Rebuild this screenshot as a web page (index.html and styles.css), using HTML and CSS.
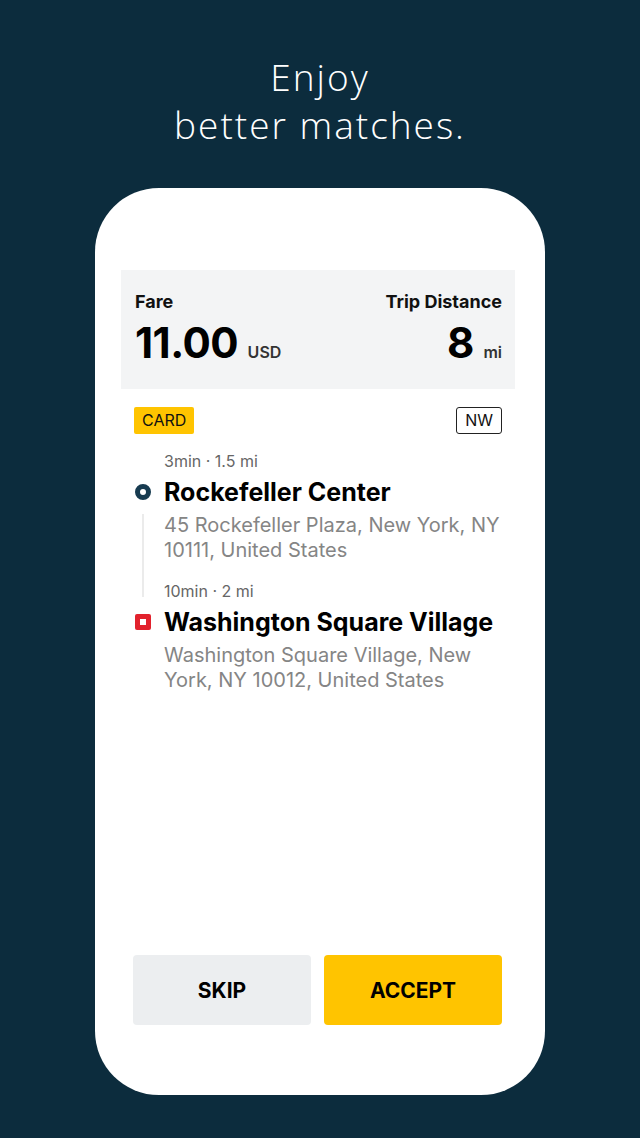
FILE: index.html
```html
<!DOCTYPE html>
<html lang="en">
<head>
    <meta charset="UTF-8">
    <meta name="viewport" content="width=device-width, initial-scale=1.0">
    <title>Enjoy better matches</title>
    <link rel="stylesheet" href="styles.css">
</head>
<body>

    <h1 class="headline">Enjoy<br>better matches.</h1>

    <div class="phone">
        <div class="summary">
            <div class="summary-col">
                <div class="summary-label">Fare</div>
                <div class="summary-value">11.00 <span class="unit">USD</span></div>
            </div>
            <div class="summary-col right">
                <div class="summary-label">Trip Distance</div>
                <div class="summary-value">8 <span class="unit">mi</span></div>
            </div>
        </div>

        <div class="trip">
            <div class="tags">
                <span class="tag tag-pay">CARD</span>
                <span class="tag tag-dir">NW</span>
            </div>

            <div class="route">
                <div class="meta m1">3min · 1.5 mi</div>
                <span class="pin pin-start i1"></span>
                <div class="place n1">Rockefeller Center</div>
                <div class="rail"></div>
                <div class="address a1">45 Rockefeller Plaza, New York, NY 10111, United States</div>
                <div class="meta m2">10min · 2 mi</div>
                <span class="pin pin-end i2"></span>
                <div class="place n2">Washington Square Village</div>
                <div class="address a2">Washington Square Village, New York, NY 10012, United States</div>
            </div>
        </div>

        <div class="actions">
            <button class="btn skip-btn">SKIP</button>
            <button class="btn accept-btn">ACCEPT</button>
        </div>
    </div>

</body>
</html>
```

FILE: styles.css
```css
body {
    margin: 0;
    background: #0c2c3d;
    font-family: Inter, "Liberation Sans", sans-serif;
    height: 1138px;
    overflow: hidden;
}
.headline {
    margin: 0;
    padding-top: 53px;
    text-align: center;
    color: #ffffff;
    font-family: "Open Sans", Lato, sans-serif;
    font-weight: 300;
    font-size: 37px;
    line-height: 48px;
    letter-spacing: 2px;
}
.phone {
    width: 450px;
    height: 907px;
    margin: 39px 0 0 95px;
    background: #ffffff;
    border-radius: 64px;
    box-sizing: border-box;
    padding: 82px 30px 0 26px;
    display: flex;
    flex-direction: column;
}
.summary {
    height: 119px;
    background: #f3f4f5;
    box-sizing: border-box;
    padding: 21px 13px 0 14px;
    display: flex;
    justify-content: space-between;
}
.summary-col.right {
    text-align: right;
}
.summary-label {
    font-size: 18px;
    font-weight: 700;
    line-height: 22px;
    color: #111111;
}
.summary-value {
    margin-top: 6px;
    font-size: 42px;
    font-weight: 700;
    line-height: 48px;
    color: #000000;
    letter-spacing: -0.5px;
}
.unit {
    font-size: 16px;
    font-weight: 600;
    color: #333333;
    letter-spacing: 0;
}
.trip {
    padding: 18px 13px 0 13px;
    flex: 1;
}
.tags {
    display: flex;
    justify-content: space-between;
}
.tag {
    height: 27px;
    box-sizing: border-box;
    padding: 0 8px;
    font-size: 16px;
    line-height: 27px;
    color: #111111;
}
.tag-pay {
    background: #ffc400;
    border-radius: 2px;
}
.tag-dir {
    border: 1px solid #222222;
    border-radius: 3px;
    line-height: 25px;
}
.route {
    display: grid;
    grid-template-columns: 30px 1fr;
    margin-top: 17px;
}
.meta {
    grid-column: 2;
    font-size: 16px;
    line-height: 20px;
    color: #666666;
}
.m1 { grid-row: 1; }
.m2 { grid-row: 4; margin-top: 18px; }
.place {
    grid-column: 2;
    font-size: 25px;
    font-weight: 700;
    line-height: 32px;
    color: #000000;
    margin-top: 5px;
}
.n1 { grid-row: 2; }
.n2 { grid-row: 5; }
.address {
    grid-column: 2;
    margin-top: 5px;
    font-size: 20px;
    line-height: 25px;
    color: #858585;
}
.a1 { grid-row: 3; }
.a2 { grid-row: 6; }
.pin {
    grid-column: 1;
    align-self: center;
    margin-top: 5px;
    margin-left: 1px;
    width: 16px;
    height: 16px;
    box-sizing: border-box;
}
.i1 { grid-row: 2; }
.i2 { grid-row: 5; }
.pin-start {
    border: 5px solid #173b50;
    border-radius: 50%;
}
.pin-end {
    background: #e2222d;
    border-radius: 2px;
    position: relative;
}
.pin-end::after {
    content: "";
    position: absolute;
    left: 5px;
    top: 5px;
    width: 6px;
    height: 6px;
    background: #ffffff;
}
.rail {
    grid-column: 1;
    grid-row: 3 / 5;
    width: 2px;
    margin-left: 8px;
    background: #ebebeb;
    margin-top: 6px;
    margin-bottom: 4px;
}
.actions {
    display: flex;
    gap: 13px;
    padding: 0 13px 70px 12px;
}
.btn {
    flex: 1;
    height: 70px;
    border: none;
    border-radius: 4px;
    font-family: Inter, "Liberation Sans", sans-serif;
    font-size: 21px;
    font-weight: 700;
    color: #000000;
    cursor: pointer;
}
.skip-btn { background: #eceef0; }
.accept-btn { background: #ffc400; }
```
